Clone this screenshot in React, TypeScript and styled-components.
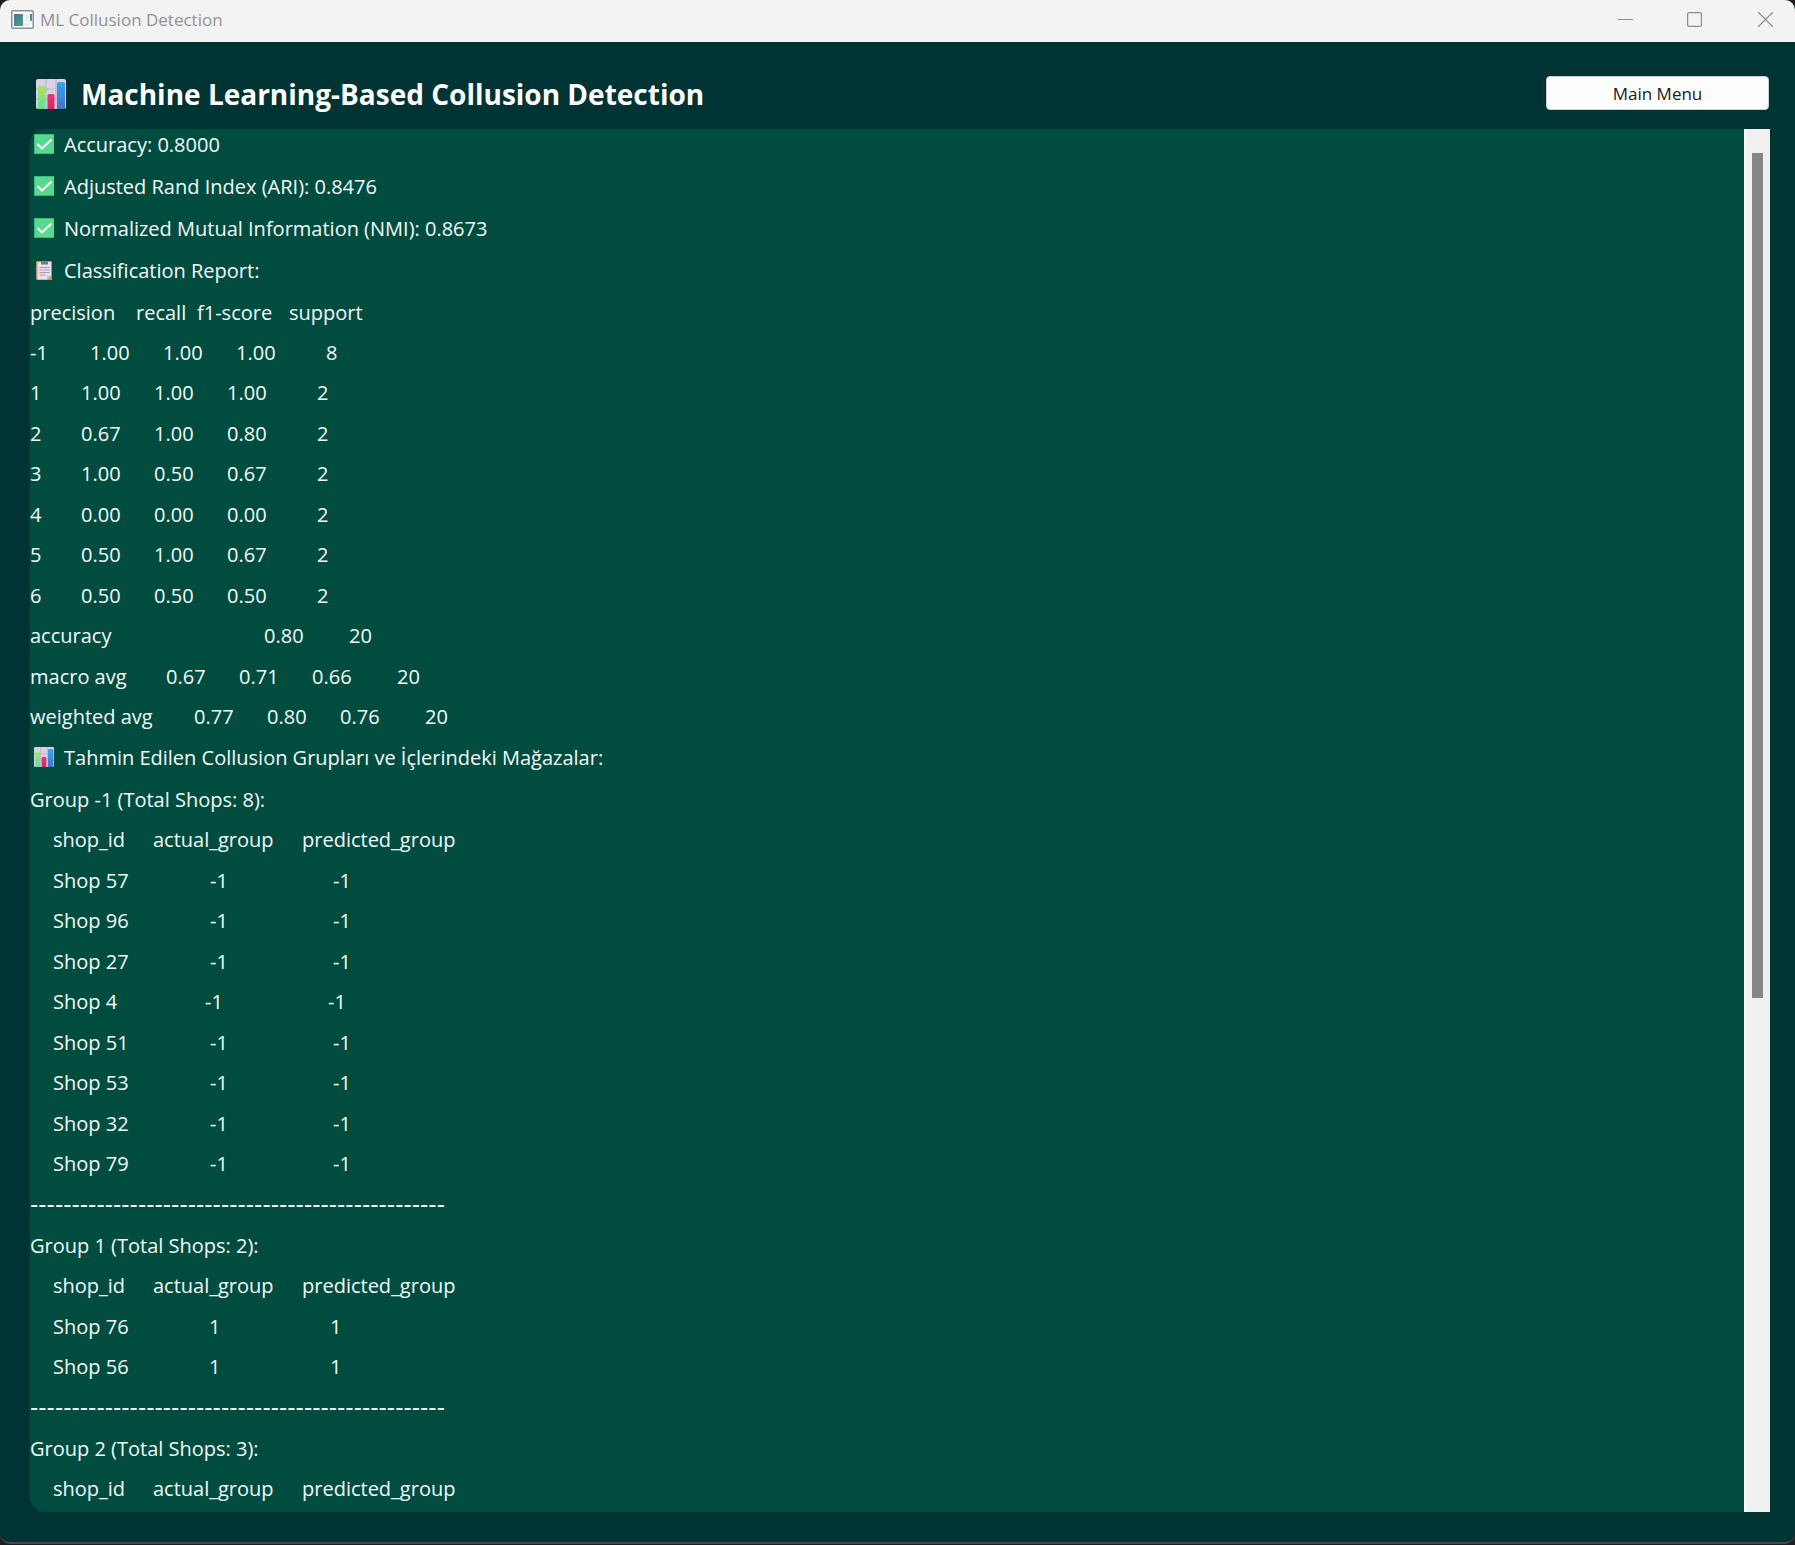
import React from "react";
import styled, { createGlobalStyle } from "styled-components";

const GlobalStyle = createGlobalStyle`
  *, *::before, *::after { box-sizing: border-box; }
  body {
    margin: 0;
    background: #1f1f1f;
    font-family: "Open Sans", "Noto Sans", sans-serif;
  }
`;

const AppWindow = styled.div`
  display: flex;
  flex-direction: column;
  height: calc(100vh - 1px);
  overflow: hidden;
  background: #003333;
  border-bottom: 2px solid #484848;
  border-radius: 10px;
`;

const TitleBar = styled.div`
  display: flex;
  flex: none;
  align-items: center;
  gap: 6px;
  height: 42px;
  padding: 0 0 4px 11px;
  background: #f3f3f3;
  color: #929292;
`;

const WindowTitle = styled.span`
  flex: 1;
  padding-top: 2px;
  font-size: 17px;
  line-height: 24px;
`;

const WindowControls = styled.div`
  display: flex;
`;

const ControlButton = styled.button`
  display: flex;
  align-items: center;
  justify-content: center;
  width: 69px;
  height: 38px;
  padding: 0;
  border: 0;
  background: transparent;
  color: #8e8e8e;

  &:last-child {
    width: 60px;
    margin-left: 6px;
  }
`;

const Content = styled.main`
  display: flex;
  flex: 1;
  flex-direction: column;
  gap: 19px;
  min-height: 0;
  padding: 34px 25px 30px 30px;
`;

const Header = styled.header`
  display: flex;
  align-items: center;
  justify-content: space-between;
  height: 34px;
  padding-right: 1px;
  padding-left: 6px;
`;

const Heading = styled.h1`
  display: flex;
  align-items: center;
  gap: 15px;
  margin: 0;
  padding-top: 2px;
  color: #ffffff;
  font-size: 28px;
  font-weight: 700;
  line-height: 36px;
  white-space: nowrap;
`;

const MenuButton = styled.button`
  width: 223px;
  height: 34px;
  padding: 2px 0 0;
  border: 1px solid #d0d0d0;
  border-radius: 4px;
  background: #fdfdfd;
  color: #1a1a1a;
  font-family: inherit;
  font-size: 17px;
  line-height: 24px;
`;

const ScrollArea = styled.section`
  display: flex;
  flex: 1;
  min-height: 0;
  overflow: hidden;
  border-radius: 15px 0 0 15px;
  background: #004d40;
`;

const Output = styled.div`
  flex: 1;
  min-width: 0;
  padding-top: 1px;
  overflow: hidden;
  color: #f4faf8;
  font-size: 20px;
  line-height: 30px;
  white-space: nowrap;
`;

const ScrollTrack = styled.div`
  flex: none;
  width: 26px;
  padding: 24px 7px 0 6px;
  border-left: 2px solid #fafafa;
  background: #f0f0f0;
`;

const ScrollThumb = styled.div`
  height: calc(62% + 2px);
  background: #868686;
`;

const IconLine = styled.p`
  display: flex;
  align-items: flex-start;
  gap: 10px;
  height: 42px;
  margin: 0;
  padding-left: 4px;

  svg {
    flex: none;
    margin-top: 4px;
  }
`;

const GroupTitle = styled.h2`
  height: 40px;
  margin: 0;
  font-size: 20px;
  font-weight: 400;
  line-height: 30px;
`;

const Separator = styled.p`
  height: 41px;
  margin: 0;
  font-family: "DejaVu Sans", sans-serif;
  font-size: 23px;
  line-height: 28px;
`;

const DataTable = styled.table<{ $indent?: number }>`
  display: block;
  padding-left: ${(p) => p.$indent ?? 0}px;

  thead, tbody { display: block; }
  tbody tr:nth-child(even) { height: 41px; }
`;

const Row = styled.tr<{ $height?: number }>`
  display: flex;
  height: ${(p) => p.$height ?? 40}px;
`;

const cell = (width?: number) => `
  display: block;
  flex: none;
  width: ${width ? `${width}px` : "auto"};
  padding: 0;
  font-weight: 400;
  text-align: left;
`;

const Cell = styled.td<{ $width?: number }>`
  ${(p) => cell(p.$width)}
`;

const HeadCell = styled.th<{ $width?: number }>`
  ${(p) => cell(p.$width)}
`;

function AppIcon() {
  return (
    <svg width="23" height="19" viewBox="0 0 23 19" aria-hidden="true">
      <defs>
        <linearGradient id="appIconFill" x1="0" y1="0" x2="1" y2="1">
          <stop offset="0" stopColor="#4672a4" />
          <stop offset="1" stopColor="#4fa577" />
        </linearGradient>
      </defs>
      <rect x="0.75" y="0.75" width="21.5" height="17.5" rx="1" fill="#fafafa" stroke="#8b9197" strokeWidth="1.5" />
      <rect x="3" y="4" width="9" height="12" fill="url(#appIconFill)" />
      <rect x="14" y="4" width="4" height="7" fill="#e9ebec" />
      <rect x="19" y="4" width="2" height="7" fill="url(#appIconFill)" />
      <rect x="14" y="13" width="4" height="3" fill="#ececec" />
    </svg>
  );
}

function ChartIcon({ size }: { size: number }) {
  const id = `chart${size}`;
  return (
    <svg width={size} height={size} viewBox="0 0 30 30" aria-hidden="true">
      <defs>
        <linearGradient id={`${id}g`} x1="0" y1="0" x2="0" y2="1">
          <stop offset="0" stopColor="#b4e05c" />
          <stop offset="1" stopColor="#5ce29a" />
        </linearGradient>
        <linearGradient id={`${id}p`} x1="0" y1="0" x2="0" y2="1">
          <stop offset="0" stopColor="#e8327a" />
          <stop offset="1" stopColor="#cf2f62" />
        </linearGradient>
        <linearGradient id={`${id}b`} x1="0" y1="0" x2="0" y2="1">
          <stop offset="0" stopColor="#35a5f2" />
          <stop offset="1" stopColor="#4273cb" />
        </linearGradient>
      </defs>
      <rect width="30" height="30" rx="2" fill="#d9d2e2" />
      <path d="M0 10H30M0 20H30M10 0V30M20 0V30" stroke="#b9b1c4" strokeWidth="1" />
      <path d="M2 30V8.500a1.500 1.500 0 0 1 1.500-1.500H7.500A1.500 1.500 0 0 1 9 8.500V30Z" fill={`url(#${id}g)`} />
      <path d="M11.500 30V16.500a1.500 1.500 0 0 1 1.500-1.500H17A1.500 1.500 0 0 1 18.500 16.500V30Z" fill={`url(#${id}p)`} />
      <path d="M21 30V4.500a1.500 1.500 0 0 1 1.500-1.500H27.500A1.500 1.500 0 0 1 29 4.500V30Z" fill={`url(#${id}b)`} />
    </svg>
  );
}

function CheckIcon() {
  return (
    <svg width="20" height="20" viewBox="0 0 20 20" aria-hidden="true">
      <rect width="20" height="20" fill="#3fb87c" />
      <rect x="1" y="1" width="19" height="18" fill="#57d98e" />
      <path d="M4 10.500 8 14.500 17 6" fill="none" stroke="#ffffff" strokeWidth="2" strokeLinecap="round" strokeLinejoin="round" />
    </svg>
  );
}

function ClipboardIcon() {
  return (
    <svg width="20" height="20" viewBox="0 0 20 20" aria-hidden="true">
      <rect x="2" y="1" width="16" height="19" rx="1" fill="#c98a70" />
      <path d="M3.500 2H17V16L13 19.500H3.500Z" fill="#e9e0ee" />
      <path d="M18 15V20H13Z" fill="#dd8a55" />
      <path d="M13 19.500V16H17Z" fill="#c9bdd2" />
      <path d="M7 3V1.500H9A1.300 1.300 0 0 1 11.500 1.500H14V4.500H7Z" fill="#7d7385" />
      <path d="M5.500 7.500H15.500M5.500 10H15.500M5.500 12.500H15.500M5.500 15H11.500" stroke="#a89db3" strokeWidth="1" />
    </svg>
  );
}

const scores = [
  "Accuracy: 0.8000",
  "Adjusted Rand Index (ARI): 0.8476",
  "Normalized Mutual Information (NMI): 0.8673",
];

type ReportRow = { label: string; lead: number; values: string[]; support: string };

const report: ReportRow[] = [
  { label: "-1", lead: 60, values: ["1.00", "1.00", "1.00"], support: "8" },
  { label: "1", lead: 51, values: ["1.00", "1.00", "1.00"], support: "2" },
  { label: "2", lead: 51, values: ["0.67", "1.00", "0.80"], support: "2" },
  { label: "3", lead: 51, values: ["1.00", "0.50", "0.67"], support: "2" },
  { label: "4", lead: 51, values: ["0.00", "0.00", "0.00"], support: "2" },
  { label: "5", lead: 51, values: ["0.50", "1.00", "0.67"], support: "2" },
  { label: "6", lead: 51, values: ["0.50", "0.50", "0.50"], support: "2" },
  { label: "accuracy", lead: 88, values: ["", "", "0.80"], support: "20" },
  { label: "macro avg", lead: 136, values: ["0.67", "0.71", "0.66"], support: "20" },
  { label: "weighted avg", lead: 164, values: ["0.77", "0.80", "0.76"], support: "20" },
];

type Group = { id: string; total: number; shops: string[] };

const groups: Group[] = [
  {
    id: "-1",
    total: 8,
    shops: ["Shop 57", "Shop 96", "Shop 27", "Shop 4", "Shop 51", "Shop 53", "Shop 32", "Shop 79"],
  },
  { id: "1", total: 2, shops: ["Shop 76", "Shop 56"] },
  { id: "2", total: 3, shops: [] },
];

function ReportTable() {
  return (
    <DataTable>
      <thead>
        <Row>
          <HeadCell scope="col" $width={106}>precision</HeadCell>
          <HeadCell scope="col" $width={61}>recall</HeadCell>
          <HeadCell scope="col" $width={92}>f1-score</HeadCell>
          <HeadCell scope="col">support</HeadCell>
        </Row>
      </thead>
      <tbody>
        {report.map((row) => (
          <Row key={row.label}>
            <HeadCell scope="row" $width={row.lead}>{row.label}</HeadCell>
            <Cell $width={73}>{row.values[0]}</Cell>
            <Cell $width={73}>{row.values[1]}</Cell>
            <Cell $width={row.support.length > 1 ? 85 : 90}>{row.values[2]}</Cell>
            <Cell>{row.support}</Cell>
          </Row>
        ))}
      </tbody>
    </DataTable>
  );
}

function GroupBlock({ group, last }: { group: Group; last: boolean }) {
  const negative = group.id.startsWith("-");
  return (
    <>
      <GroupTitle>
        Group {group.id} (Total Shops: {group.total}):
      </GroupTitle>
      <DataTable $indent={23}>
        <thead>
          <Row $height={41}>
            <HeadCell scope="col" $width={100}>shop_id</HeadCell>
            <HeadCell scope="col" $width={149}>actual_group</HeadCell>
            <HeadCell scope="col">predicted_group</HeadCell>
          </Row>
        </thead>
        <tbody>
          {group.shops.map((shop) => (
            <Row key={shop}>
              <Cell $width={(shop.length < 7 ? 151 : 156) + (negative ? 1 : 0)}>{shop}</Cell>
              <Cell $width={negative ? 123 : 121}>{group.id}</Cell>
              <Cell>{group.id}</Cell>
            </Row>
          ))}
        </tbody>
      </DataTable>
      {!last && <Separator>{"-".repeat(50)}</Separator>}
    </>
  );
}

export default function App() {
  return (
    <>
      <GlobalStyle />
      <AppWindow>
        <TitleBar>
          <AppIcon />
          <WindowTitle>ML Collusion Detection</WindowTitle>
          <WindowControls>
            <ControlButton aria-label="Minimize">
              <svg width="15" height="15" viewBox="0 0 15 15">
                <path d="M0 7.500H15" stroke="currentColor" />
              </svg>
            </ControlButton>
            <ControlButton aria-label="Maximize">
              <svg width="15" height="15" viewBox="0 0 15 15">
                <rect x="0.600" y="0.600" width="13.800" height="13.800" rx="1.500" fill="none" stroke="currentColor" strokeWidth="1.200" />
              </svg>
            </ControlButton>
            <ControlButton aria-label="Close">
              <svg width="15" height="15" viewBox="0 0 15 15">
                <path d="M0.500 0.500 14.500 14.500M14.500 0.500 0.500 14.500" stroke="currentColor" strokeWidth="1.200" strokeLinecap="round" />
              </svg>
            </ControlButton>
          </WindowControls>
        </TitleBar>
        <Content>
          <Header>
            <Heading>
              <ChartIcon size={30} />
              Machine Learning-Based Collusion Detection
            </Heading>
            <MenuButton type="button">Main Menu</MenuButton>
          </Header>
          <ScrollArea>
            <Output>
              {scores.map((score) => (
                <IconLine key={score}>
                  <CheckIcon />
                  {score}
                </IconLine>
              ))}
              <IconLine>
                <ClipboardIcon />
                Classification Report:
              </IconLine>
              <ReportTable />
              <IconLine>
                <ChartIcon size={20} />
                Tahmin Edilen Collusion Grupları ve İçlerindeki Mağazalar:
              </IconLine>
              {groups.map((group, index) => (
                <GroupBlock key={group.id} group={group} last={index === groups.length - 1} />
              ))}
            </Output>
            <ScrollTrack>
              <ScrollThumb />
            </ScrollTrack>
          </ScrollArea>
        </Content>
      </AppWindow>
    </>
  );
}
